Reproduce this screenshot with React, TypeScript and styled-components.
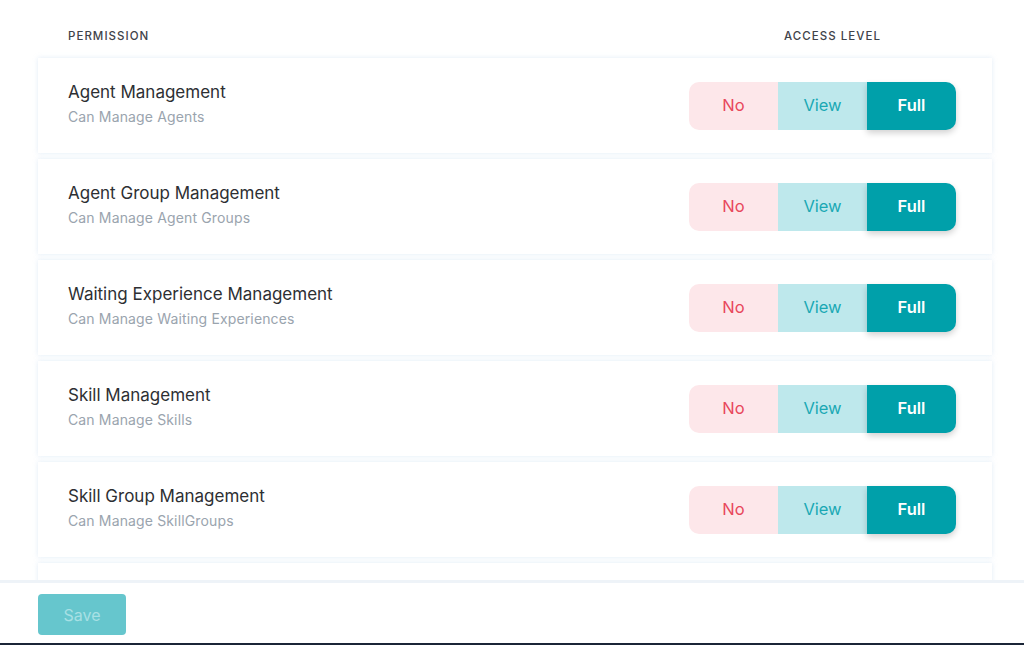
import styled, { createGlobalStyle } from 'styled-components';

interface Permission {
  title: string;
  description: string;
  level: 'no' | 'view' | 'full';
}

const permissions: Permission[] = [
  { title: 'Agent Management', description: 'Can Manage Agents', level: 'full' },
  { title: 'Agent Group Management', description: 'Can Manage Agent Groups', level: 'full' },
  { title: 'Waiting Experience Management', description: 'Can Manage Waiting Experiences', level: 'full' },
  { title: 'Skill Management', description: 'Can Manage Skills', level: 'full' },
  { title: 'Skill Group Management', description: 'Can Manage SkillGroups', level: 'full' },
];

export default function App() {
  return (
    <>
      <GlobalStyle />
      <Page>
        <Scroller>
          <HeaderRow>
            <HeaderLabel>Permission</HeaderLabel>
            <HeaderLabel>Access Level</HeaderLabel>
          </HeaderRow>
          <List>
            {permissions.map((p) => (
              <Card key={p.title}>
                <TextBlock>
                  <Title>{p.title}</Title>
                  <Description>{p.description}</Description>
                </TextBlock>
                <Toggle>
                  <Segment $kind="no" $active={p.level === 'no'}>No</Segment>
                  <Segment $kind="view" $active={p.level === 'view'}>View</Segment>
                  <Segment $kind="full" $active={p.level === 'full'}>Full</Segment>
                </Toggle>
              </Card>
            ))}
            {/* next row, scrolled below the footer */}
            <Card />
          </List>
        </Scroller>
        <Footer>
          <SaveButton disabled>Save</SaveButton>
        </Footer>
        <BottomBar />
      </Page>
    </>
  );
}

const GlobalStyle = createGlobalStyle`
  html, body {
    margin: 0;
    padding: 0;
    background: #ffffff;
    font-family: Inter, "Noto Sans", sans-serif;
  }
  * {
    box-sizing: border-box;
  }
`;

const Page = styled.div`
  width: 1024px;
  height: 645px;
  display: flex;
  flex-direction: column;
  overflow: hidden;
  background: #ffffff;
`;

const Scroller = styled.div`
  height: 580px;
  flex-shrink: 0;
  overflow: hidden;
  padding: 28px 32px 0 38px;
`;

const HeaderRow = styled.div`
  display: flex;
  justify-content: space-between;
  padding: 0 111px 0 30px;
  margin-bottom: 14px;
`;

const HeaderLabel = styled.span`
  font-size: 11.5px;
  line-height: 16px;
  letter-spacing: 0.09em;
  text-transform: uppercase;
  color: #3f434a;
  font-weight: 500;
`;

const List = styled.div`
  display: flex;
  flex-direction: column;
  gap: 6px;
`;

const Card = styled.div`
  height: 95px;
  flex-shrink: 0;
  display: flex;
  align-items: center;
  justify-content: space-between;
  padding: 0 36px 0 30px;
  background: #ffffff;
  box-shadow: 0 0 5px rgba(170, 200, 230, 0.35);
`;

const TextBlock = styled.div`
  display: flex;
  flex-direction: column;
  gap: 6px;
  padding-bottom: 4px;
`;

const Title = styled.div`
  font-size: 17px;
  line-height: 20px;
  color: #2d2f33;
`;

const Description = styled.div`
  font-size: 14px;
  line-height: 18px;
  letter-spacing: 0.01em;
  color: #9aa4ae;
`;

const Toggle = styled.div`
  display: flex;
  height: 48px;
  border-radius: 10px;
`;

const segmentColors = {
  no: { bg: '#fde7ea', fg: '#e8475c', activeBg: '#e8475c' },
  view: { bg: '#bee8ec', fg: '#1aa8b4', activeBg: '#1aa8b4' },
  full: { bg: '#bee8ec', fg: '#1aa8b4', activeBg: '#00a0aa' },
};

const Segment = styled.div<{ $kind: 'no' | 'view' | 'full'; $active: boolean }>`
  width: 89px;
  display: flex;
  align-items: center;
  justify-content: center;
  padding-bottom: 2px;
  font-size: 16.5px;
  font-weight: ${(p) => (p.$active ? 600 : 400)};
  background: ${(p) => (p.$active ? segmentColors[p.$kind].activeBg : segmentColors[p.$kind].bg)};
  color: ${(p) => (p.$active ? '#ffffff' : segmentColors[p.$kind].fg)};
  box-shadow: ${(p) => (p.$active ? '0 3px 6px rgba(0, 0, 0, 0.18)' : 'none')};
  cursor: pointer;

  &:first-child {
    border-radius: 10px 0 0 10px;
  }
  &:last-child {
    border-radius: 0 10px 10px 0;
  }
`;

const Footer = styled.div`
  flex: 1;
  padding: 11px 38px 0;
  border-top: 3px solid #eef3f8;
  background: #ffffff;
`;

const SaveButton = styled.button`
  width: 88px;
  height: 41px;
  border: none;
  border-radius: 4px;
  background: #66c6cd;
  color: #a8e0e4;
  font-family: Inter, "Noto Sans", sans-serif;
  font-size: 16px;
  cursor: not-allowed;
`;

const BottomBar = styled.div`
  height: 2px;
  flex-shrink: 0;
  background: #1b2537;
`;
